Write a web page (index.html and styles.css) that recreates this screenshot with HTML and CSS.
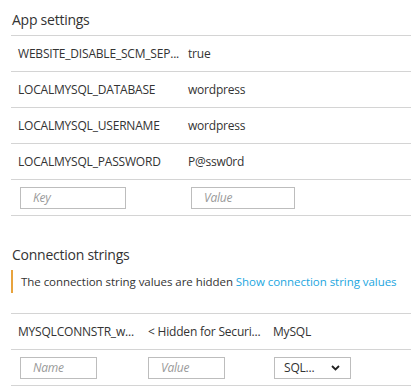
FILE: index.html
```html
<!DOCTYPE html>
<html>
<head>
<meta charset="utf-8">
<link rel="stylesheet" href="styles.css">
</head>
<body>
<section class="section">
  <h2 class="section-title">App settings</h2>
  <div class="table app-table">
    <div class="row"><div class="cell">WEBSITE_DISABLE_SCM_SEP...</div><div class="cell">true</div></div>
    <div class="row"><div class="cell">LOCALMYSQL_DATABASE</div><div class="cell">wordpress</div></div>
    <div class="row"><div class="cell">LOCALMYSQL_USERNAME</div><div class="cell">wordpress</div></div>
    <div class="row"><div class="cell">LOCALMYSQL_PASSWORD</div><div class="cell">P@ssw0rd</div></div>
    <div class="row input-row">
      <div class="cell"><div class="field field-key">Key</div></div>
      <div class="cell"><div class="field field-value">Value</div></div>
    </div>
  </div>
</section>
<section class="section conn">
  <h2 class="section-title">Connection strings</h2>
  <div class="notice">The connection string values are hidden <a class="link" href="#">Show connection string values</a></div>
  <div class="table conn-table">
    <div class="row"><div class="cell">MYSQLCONNSTR_w...</div><div class="cell">&lt; Hidden for Securi...</div><div class="cell">MySQL</div></div>
    <div class="row input-row">
      <div class="cell"><div class="field field-small">Name</div></div>
      <div class="cell"><div class="field field-small">Value</div></div>
      <div class="cell"><div class="field field-small select"><span class="select-text">SQL...</span><svg class="chev" width="9" height="6" viewBox="0 0 9 6"><path d="M1 1 L4.5 4.5 L8 1" fill="none" stroke="#222" stroke-width="1.8"/></svg></div></div>
    </div>
  </div>
</section>
</body>
</html>
```
FILE: styles.css
```css
html, body {
  margin: 0;
  padding: 0;
  background: #fff;
}
body {
  font-family: "Open Sans", "Noto Sans", sans-serif;
  font-size: 12px;
  letter-spacing: -0.2px;
  color: #333;
  padding-left: 11px;
  width: 400px;
  overflow: hidden;
}
.section-title {
  margin: 0;
  font-weight: normal;
  font-size: 14px;
  letter-spacing: -0.25px;
  line-height: 20px;
  padding: 10px 0 5px 1px;
  color: #333;
  border-bottom: 1px solid #d4d4d4;
}
.row {
  display: grid;
  height: 35px;
  align-items: center;
  border-bottom: 1px solid #d4d4d4;
  white-space: nowrap;
}
.app-table .row {
  grid-template-columns: 170px 1fr;
}
.conn-table .row {
  grid-template-columns: 130px 125px 1fr;
}
.cell {
  padding-left: 7px;
  overflow: hidden;
}
.input-row .cell {
  padding-left: 9px;
}
.field {
  box-sizing: border-box;
  height: 22px;
  border: 1px solid #bdbdbd;
  color: #9a9a9a;
  font-style: italic;
  line-height: 20px;
  padding-left: 12px;
}
.field-key { width: 106px; }
.field-value { width: 104px; }
.app-table .input-row .cell:nth-child(2) { padding-left: 10px; }
.field-small { width: 77px; }
.conn-table .input-row .cell:nth-child(2) { padding-left: 7px; }
.conn-table .input-row .cell:nth-child(3) { padding-left: 8px; }
.select {
  display: flex;
  align-items: center;
  justify-content: space-between;
  font-style: normal;
  color: #333;
  padding-left: 9px;
  padding-right: 10px;
}
.chev { display: block; }
.conn .section-title {
  margin-top: 29px;
  border-bottom: none;
  padding: 0 0 0 1px;
}
.notice {
  margin-top: 5px;
  border-left: 2px solid #e8a33d;
  height: 23px;
  line-height: 23px;
  padding-left: 8px;
  white-space: nowrap;
  margin-bottom: 20px;
  font-size: 11.5px;
  letter-spacing: -0.05px;
}
.link {
  color: #1ba6e0;
  text-decoration: none;
}
.conn-table {
  border-top: 1px solid #d4d4d4;
}
```
